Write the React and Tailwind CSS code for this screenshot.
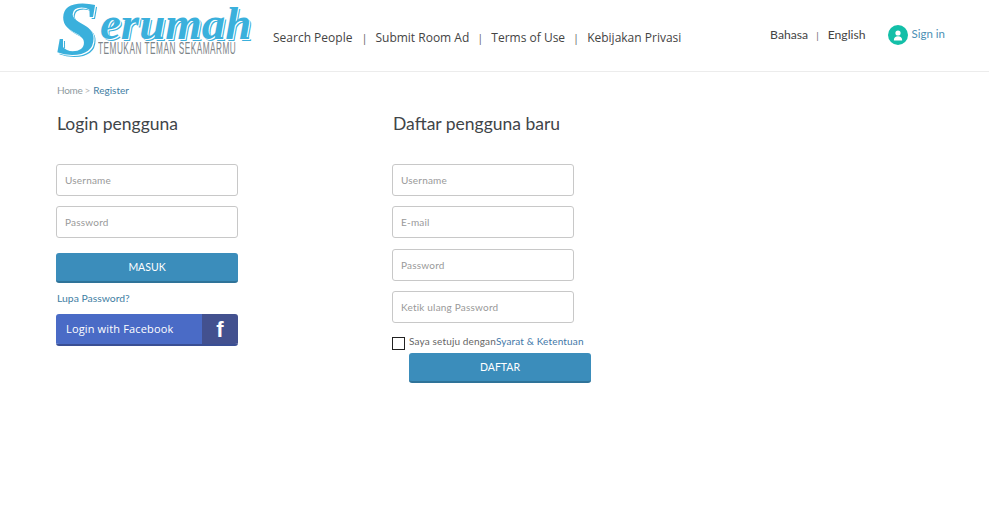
import React from "react";

const lato = "font-['Lato','Liberation_Sans',sans-serif]";
const openSans = "font-['Open_Sans','Liberation_Sans',sans-serif]";

function Field({ placeholder, className = "" }) {
  return (
    <div className={`flex h-[32px] w-[182px] items-center rounded-[3px] border border-[#c8c8c8] bg-white pl-[8px] pt-[1px] text-[10px] tracking-[0.2px] text-[#999] ${className}`}>
      {placeholder}
    </div>
  );
}

function BlueButton({ children, className = "" }) {
  return (
    <div className={`flex h-[30px] w-[182px] items-center justify-center rounded-[3px] border-b-2 border-[#2f7399] bg-[#3b8dbb] pt-[2px] text-[10.5px] text-white ${className}`}>
      {children}
    </div>
  );
}

function Sep({ className = "" }) {
  return <span className={`text-[#666] ${className}`}>|</span>;
}

export default function App() {
  return (
    <div className={`min-h-[516px] bg-white ${lato}`}>
      {/* Header */}
      <header className="flex h-[72px] items-start border-b border-[#ececec] pl-[57px]">
        <div className="relative h-[60px] w-[216px] shrink-0">
          <span className="absolute left-[-1px] top-[-14px] font-['Liberation_Serif',serif] text-[76px] font-bold italic leading-[84px] text-[#3ab0dc] [text-shadow:1px_1px_0_#fff,2px_2px_0_#3ab0dc]">
            S
          </span>
          <span className="absolute left-[43px] top-[-3px] whitespace-nowrap font-['Liberation_Serif',serif] text-[47px] font-bold italic leading-[52px] text-[#3ab0dc] [text-shadow:1px_1px_0_#fff,2px_2px_0_#3ab0dc]">
            erumah
          </span>
          <span className="absolute left-[41px] top-[41px] origin-left scale-x-[0.5] whitespace-nowrap font-['Liberation_Sans',sans-serif] text-[16.5px] leading-[15px] tracking-[1px] text-[#7d8488]">
            TEMUKAN TEMAN SEKAMARMU
          </span>
        </div>
        <nav className={`mt-[29px] flex items-center text-[12px] leading-[18px] text-[#444] ${openSans}`}>
          <span>Search People</span>
          <Sep className="ml-[9px] text-[11px]" />
          <span className="ml-[8px]">Submit Room Ad</span>
          <Sep className="ml-[8px] text-[11px]" />
          <span className="ml-[8px]">Terms of Use</span>
          <Sep className="ml-[8px] text-[11px]" />
          <span className="ml-[8px]">Kebijakan Privasi</span>
        </nav>
        <div className="ml-auto mr-[44px] mt-[25px] flex items-center text-[12.2px] text-[#444]">
          <span>Bahasa</span>
          <Sep className="ml-[8px] text-[10px]" />
          <span className="ml-[9px]">English</span>
          <span className="ml-[22px] flex h-[20px] w-[20px] items-center justify-center rounded-full bg-[#13bfa8]">
            <svg width="10" height="11" viewBox="0 0 10 11" fill="#fff">
              <circle cx="5" cy="3" r="2.6" />
              <path d="M0.8 10.5 C0.8 7.4 2.6 6.2 5 6.2 C7.4 6.2 9.2 7.4 9.2 10.5 Z" />
            </svg>
          </span>
          <span className="ml-[4px] -translate-y-[1px] text-[11.5px] text-[#4b8fb5]">Sign in</span>
        </div>
      </header>

      {/* Breadcrumb */}
      <div className="flex items-center pl-[57px] pt-[11px] text-[10px] leading-[14px]">
        <span className="tracking-[-0.3px] text-[#8f9aa0]">Home</span>
        <span className="ml-[2px] text-[#b5b5b5]">&gt;</span>
        <span className="ml-[3px] text-[#3f7ea3]">Register</span>
      </div>

      {/* Forms */}
      <main className="flex pl-[56px] pt-[15px]">
        <section className="w-[182px]">
          <h2 className="pl-[1px] text-[17.5px] leading-[24px] text-[#3f4549]">Login pengguna</h2>
          <div className="mt-[28px] flex flex-col gap-[10px]">
            <Field placeholder="Username" />
            <Field placeholder="Password" />
          </div>
          <BlueButton className="mt-[15px]">MASUK</BlueButton>
          <div className="mt-[8px] pl-[1px] text-[10.4px] leading-[14px] text-[#3f7ea3]">Lupa Password?</div>
          <div className={`mt-[9px] flex h-[32px] overflow-hidden rounded-[3px] border-b-2 border-[#3a4f94] text-[11px] tracking-[0.15px] text-white ${openSans}`}>
            <span className="flex flex-1 items-center bg-[#4a6bc6] pl-[10px]">Login with Facebook</span>
            <span className="flex w-[36px] items-center justify-center bg-[#43518f] font-['Liberation_Sans',sans-serif] text-[22px] font-bold">f</span>
          </div>
        </section>

        <section className="ml-[154px] w-[200px]">
          <h2 className="pl-[1px] text-[17.5px] leading-[24px] text-[#3f4549]">Daftar pengguna baru</h2>
          <div className="mt-[28px] flex flex-col">
            <Field placeholder="Username" />
            <Field placeholder="E-mail" className="mt-[10px]" />
            <Field placeholder="Password" className="mt-[11px]" />
            <Field placeholder="Ketik ulang Password" className="mt-[10px]" />
          </div>
          <div className="mt-[13px] flex h-[17px] items-start">
            <span className="mt-[1px] h-[13px] w-[13px] shrink-0 border border-[#222] bg-white" />
            <span className="ml-[4px] whitespace-nowrap text-[10px] leading-[10px] tracking-[0.15px] text-[#666]">
              Saya setuju dengan<span className="text-[#3f78a8]">Syarat &amp; Ketentuan</span>
            </span>
          </div>
          <BlueButton className="ml-[17px]">DAFTAR</BlueButton>
        </section>
      </main>
    </div>
  );
}
